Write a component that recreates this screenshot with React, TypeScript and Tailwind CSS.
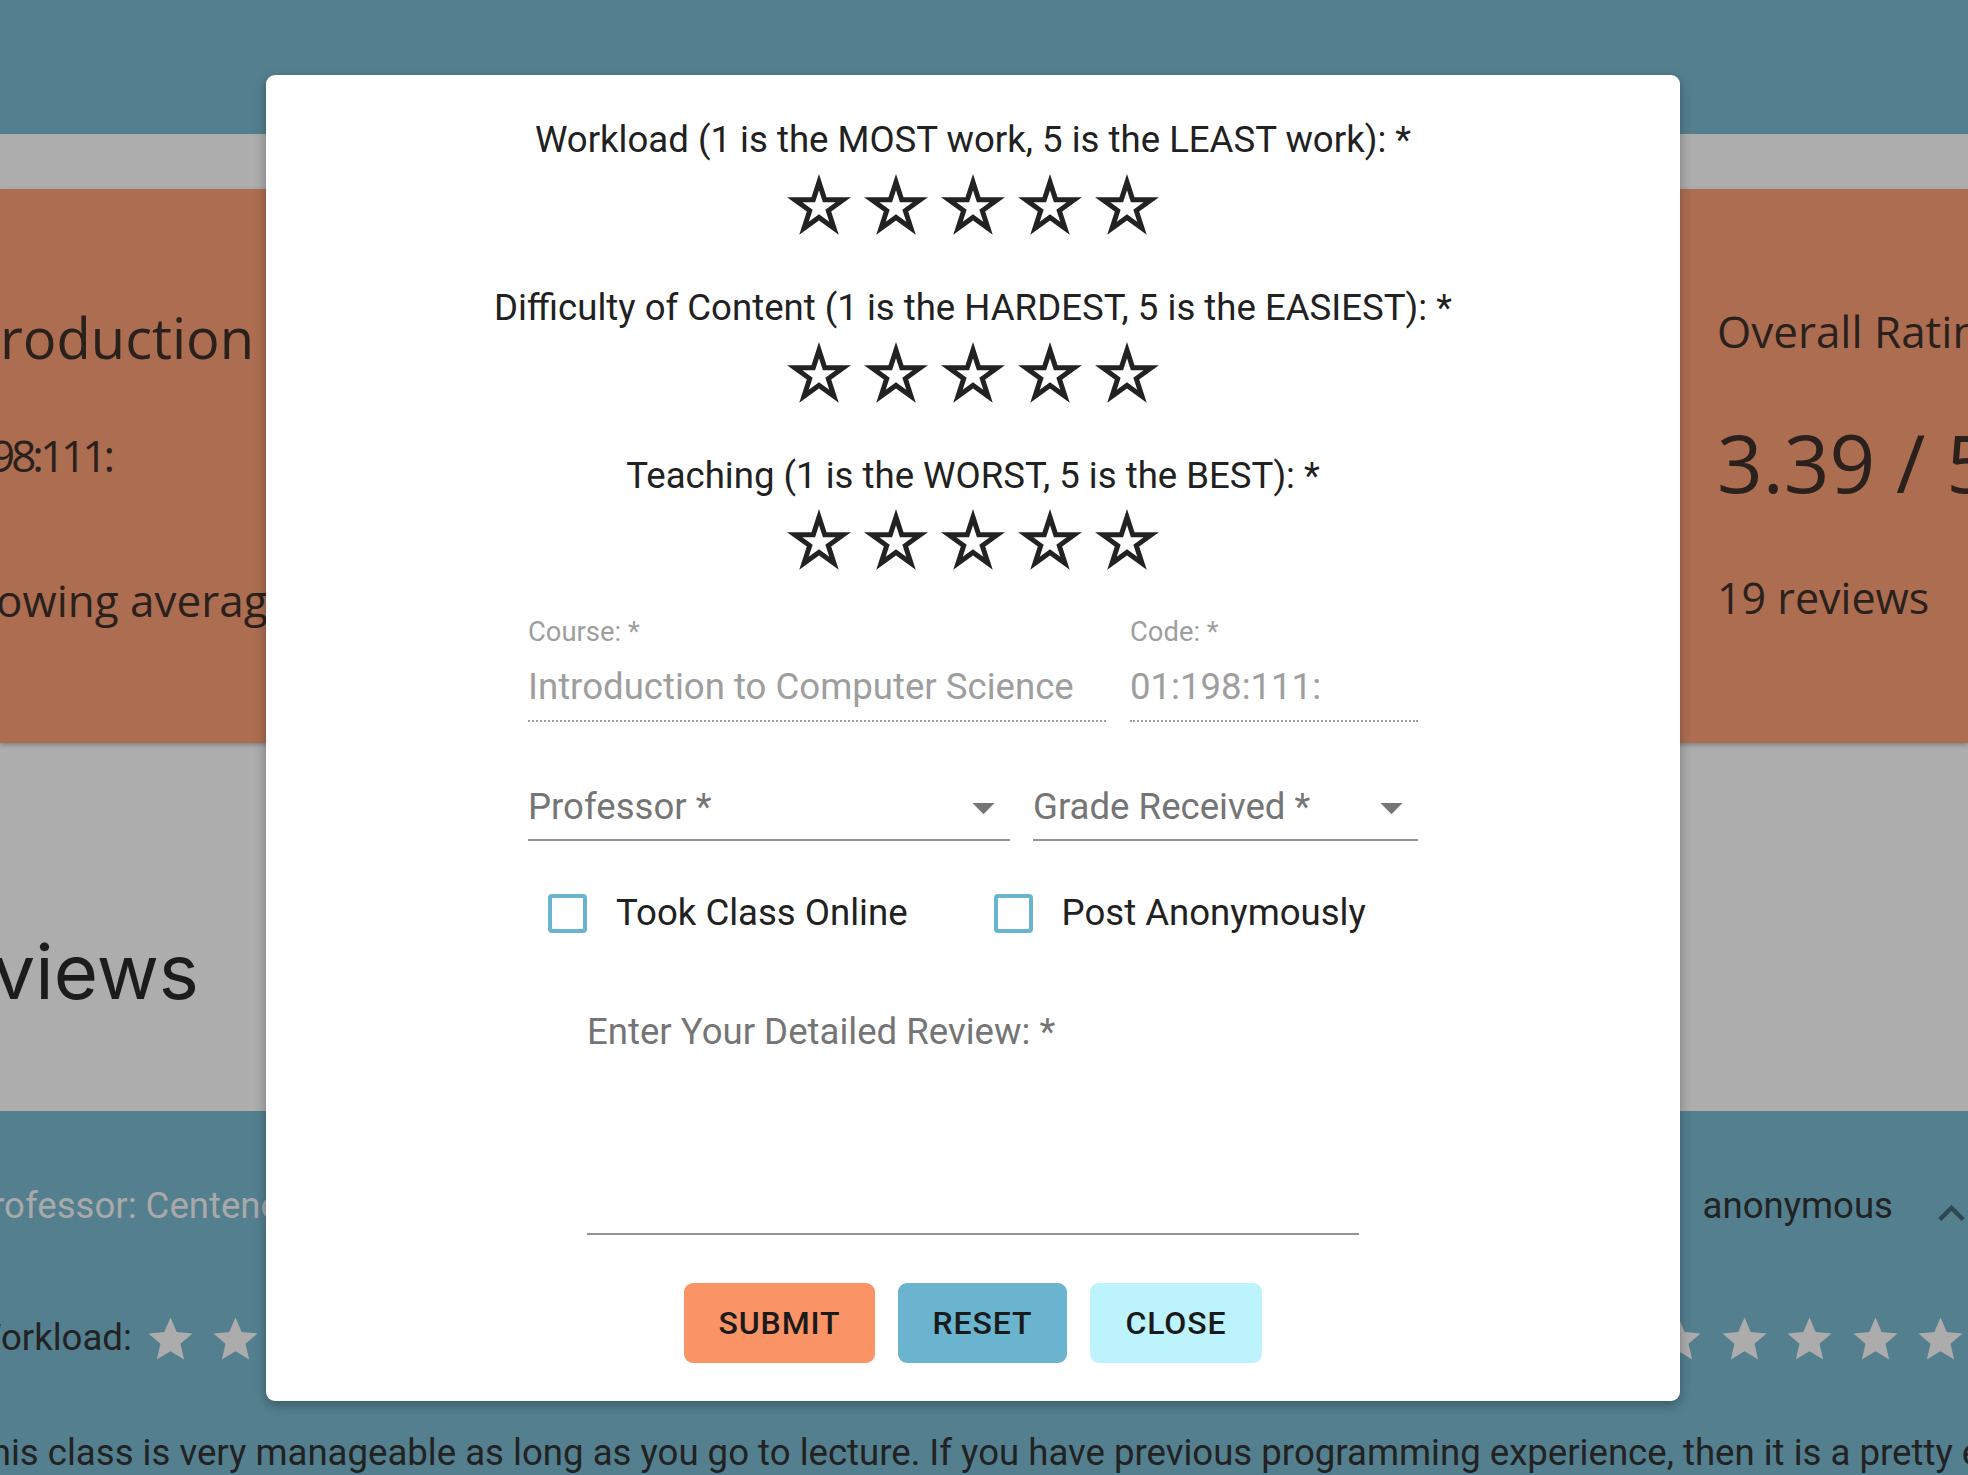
import React from 'react';

const ratingLabels = [
  'Workload (1 is the MOST work, 5 is the LEAST work): *',
  'Difficulty of Content (1 is the HARDEST, 5 is the EASIEST): *',
  'Teaching (1 is the WORST, 5 is the BEST): *',
];

const OutlineStar = () => (
  <svg width="64" height="61" viewBox="0 0 64 61" className="block">
    <path
      fillRule="evenodd"
      fill="#222222"
      d="M32 0 L39.54 23.22 L63.96 23.22 L44.21 37.57 L51.75 60.78 L32 46.44 L12.25 60.78 L19.79 37.57 L0.04 23.22 L24.46 23.22 Z M32 16.13 L28.08 28.2 L15.38 28.2 L25.65 35.66 L21.73 47.73 L32 40.27 L42.27 47.73 L38.35 35.66 L48.62 28.2 L35.92 28.2 Z"
    />
  </svg>
);

const FilledStar = () => (
  <svg width="53" height="53" viewBox="0 0 24 24" className="block shrink-0">
    <path
      fill="#acacac"
      d="M12 17.27L18.18 21l-1.64-7.03L22 9.24l-7.19-.61L12 2 9.19 8.63 2 9.24l5.46 4.73L5.82 21z"
    />
  </svg>
);

const ArrowDrop = () => (
  <svg width="53" height="53" viewBox="0 0 24 24" className="block shrink-0">
    <path fill="#757575" d="M7 10l5 5 5-5z" />
  </svg>
);

const StarRow = () => (
  <div className="flex gap-[12.5px]">
    {[0, 1, 2, 3, 4].map((i) => (
      <FilledStar key={i} />
    ))}
  </div>
);

const App: React.FC = () => {
  return (
    <div className="relative w-[1968px] h-[1475px] overflow-hidden bg-[#adadad] font-['Roboto',sans-serif]">
      {/* Page behind the dialog */}
      <header className="h-[134px] bg-[#537f8f]" />
      <div className="h-[55px] bg-[#adadad]" />

      <section className="relative z-10 h-[554px] bg-[#ad6d51] flex justify-between text-[#2a211d] font-['Open_Sans',sans-serif] shadow-[0_2px_4px_rgba(0,0,0,0.25)]">
        <div className="pt-[120px] whitespace-nowrap">
          <h1 className="-ml-[70px] text-[56px] leading-none">Introduction to Computer Science</h1>
          <p className="-ml-[81px] mt-[68px] text-[44px] leading-none tracking-[-4px]">01:198:111:</p>
          <p className="-ml-[55px] mt-[101px] text-[44px] leading-none">Showing averages for all professors</p>
        </div>
        <div className="w-[251px] pt-[120px] whitespace-nowrap">
          <p className="text-[44px] leading-none">Overall Rating</p>
          <p className="mt-[69px] text-[80px] leading-none">3.39 / 5</p>
          <p className="mt-[74px] text-[43px] leading-none">19 reviews</p>
        </div>
      </section>

      <section className="h-[368px] bg-[#adadad] pt-[190px]">
        <h2 className="-ml-[98px] text-[76px] leading-none text-[#1c1c1c] font-['Inter',sans-serif]">Reviews</h2>
      </section>

      <section className="h-[364px] bg-[#537f8f] overflow-hidden">
        <div className="-ml-[31px] -mr-[10px] pt-[69px] text-[36.6px] leading-[52.8px] whitespace-nowrap">
          <div className="flex justify-between items-start">
            <span className="text-[#a9a9a9]">Professor: Centeno</span>
            <div className="flex items-start gap-[32px]">
              <span className="text-[#222222]">anonymous</span>
              <svg width="53" height="53" viewBox="0 0 24 24" className="block mt-[7px]">
                <path fill="#2f4850" d="M12 8l-6 6 1.41 1.41L12 10.83l4.59 4.58L18 14z" />
              </svg>
            </div>
          </div>

          <div className="mt-[72px] flex justify-between items-start">
            <div className="flex items-start">
              <span className="text-[#222222]">Workload:</span>
              <div className="ml-[12px] mt-[1px]">
                <StarRow />
              </div>
            </div>
            <div className="flex items-start mr-[11px]">
              <span className="text-[#222222] mr-[14px]">Teaching:</span>
              <div className="mt-[1px]">
                <StarRow />
              </div>
            </div>
          </div>

          <p className="mt-[61px] text-[#222222]">
            This class is very manageable as long as you go to lecture. If you have previous programming experience, then it is a pretty easy class.
          </p>
        </div>
      </section>

      {/* Dialog */}
      <div className="absolute z-20 left-[266px] top-[75px] w-[1414px] h-[1326px] bg-white rounded-[9px] shadow-[0_4px_12px_rgba(0,0,0,0.3)] flex flex-col items-center pt-[39px]">
        {ratingLabels.map((label, i) => (
          <div key={label} className={i > 0 ? 'mt-[47px] flex flex-col items-center' : 'flex flex-col items-center'}>
            <p className="text-[36.6px] leading-[52.8px] text-[#212121] whitespace-nowrap">{label}</p>
            <div className="mt-[7px] flex gap-[13px]">
              {[0, 1, 2, 3, 4].map((s) => (
                <OutlineStar key={s} />
              ))}
            </div>
          </div>
        ))}

        {/* Course + code */}
        <div className="mt-[45px] w-[890px] flex gap-[24px]">
          <div className="w-[578px]">
            <div className="h-[35px] pt-[1px] text-[27.4px] leading-[32px] text-[#9e9e9e]">Course: *</div>
            <div className="h-[72px] pt-[4px] flex items-center text-[36.6px] text-[#9e9e9e] border-b-2 border-dotted border-[#9e9e9e]">
              Introduction to Computer Science
            </div>
          </div>
          <div className="w-[288px]">
            <div className="h-[35px] pt-[1px] text-[27.4px] leading-[32px] text-[#9e9e9e]">Code: *</div>
            <div className="h-[72px] pt-[4px] flex items-center text-[36.6px] text-[#9e9e9e] border-b-2 border-dotted border-[#9e9e9e]">
              01:198:111:
            </div>
          </div>
        </div>

        {/* Selects */}
        <div className="mt-[48px] w-[890px] flex gap-[23px]">
          <div className="w-[482px] h-[71px] pt-[5px] flex items-center justify-between border-b-2 border-[#949494]">
            <span className="text-[36.6px] text-[#757575]">Professor *</span>
            <ArrowDrop />
          </div>
          <div className="w-[385px] h-[71px] pt-[5px] flex items-center justify-between border-b-2 border-[#949494]">
            <span className="text-[36.6px] text-[#757575]">Grade Received *</span>
            <ArrowDrop />
          </div>
        </div>

        {/* Checkboxes */}
        <div className="mt-[46px] w-[890px] h-[53px] pl-[20px] flex items-center text-[36.6px] text-[#212121]">
          <span className="w-[39px] h-[39px] border-[4px] border-[#6ab4cf] rounded-[4px]" />
          <span className="ml-[29px]">Took Class Online</span>
          <span className="ml-[86px] w-[39px] h-[39px] border-[4px] border-[#6ab4cf] rounded-[4px]" />
          <span className="ml-[29px]">Post Anonymously</span>
        </div>

        {/* Review */}
        <div className="mt-[66px] w-[772px] h-[229px] border-b-2 border-[#949494]">
          <p className="text-[36.6px] leading-[52.8px] text-[#757575]">Enter Your Detailed Review: *</p>
        </div>

        {/* Buttons */}
        <div className="mt-[48px] flex gap-[23px]">
          <button className="w-[191px] h-[80px] rounded-[9px] bg-[#fa9366] flex items-center justify-center text-[32px] font-medium tracking-[0.9px] uppercase text-[#1a1a1a]">
            Submit
          </button>
          <button className="w-[169px] h-[80px] rounded-[9px] bg-[#6ab4cf] flex items-center justify-center text-[32px] font-medium tracking-[0.9px] uppercase text-[#1a1a1a]">
            Reset
          </button>
          <button className="w-[172px] h-[80px] rounded-[9px] bg-[#bdf3fd] flex items-center justify-center text-[32px] font-medium tracking-[0.9px] uppercase text-[#1a1a1a]">
            Close
          </button>
        </div>
      </div>
    </div>
  );
};

export default App;
